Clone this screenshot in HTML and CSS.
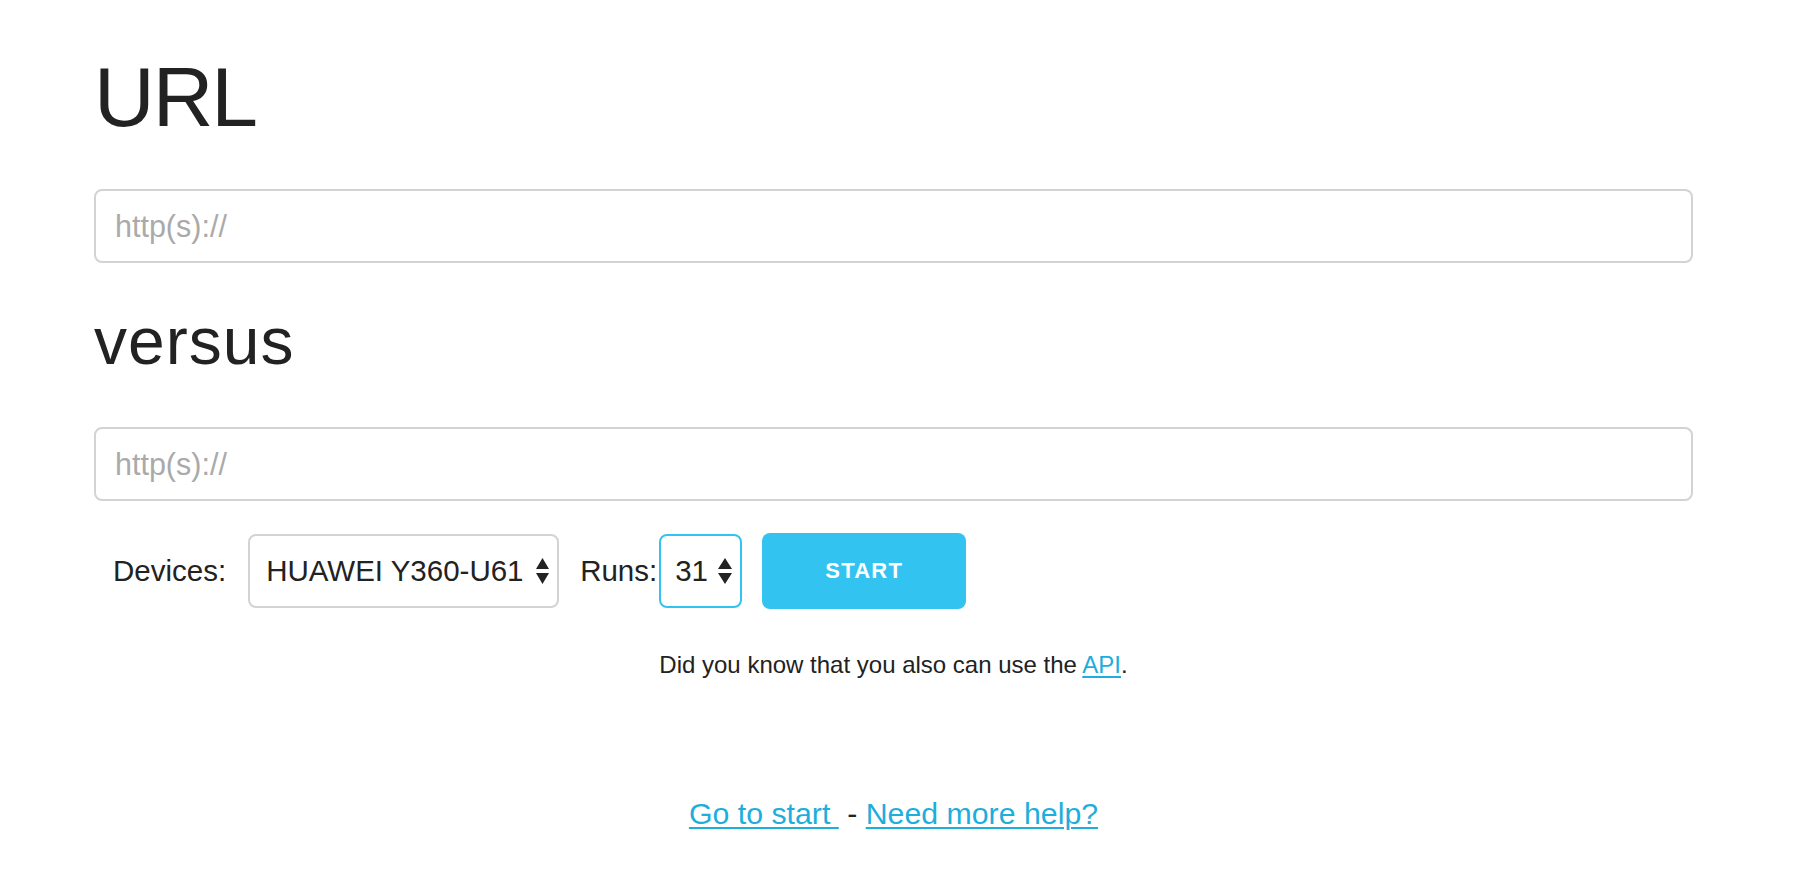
FILE: index.html
```html
<!DOCTYPE html>
<html lang="en">
<head>
<meta charset="utf-8">
<title>URL versus</title>
<link rel="stylesheet" href="styles.css">
</head>
<body>
<main class="page">
  <h1 class="title">URL</h1>
  <input class="url-input" type="text" placeholder="http(s)://">
  <h2 class="versus">versus</h2>
  <input class="url-input url-input-second" type="text" placeholder="http(s)://">
  <div class="controls">
    <span class="label label-devices">Devices:</span>
    <div class="select-box select-devices">
      <span class="select-value">HUAWEI Y360-U61</span>
      <svg class="select-arrows" width="13" height="26" viewBox="0 0 13 26"><path d="M6.5 0 L13 11 L0 11 Z M0 15 L13 15 L6.5 26 Z" fill="#222"/></svg>
    </div>
    <span class="label label-runs">Runs:</span>
    <div class="select-box select-runs">
      <span class="select-value">31</span>
      <svg class="select-arrows" width="14" height="26" viewBox="0 0 14 26"><path d="M7 0 L14 11 L0 11 Z M0 15 L14 15 L7 26 Z" fill="#222"/></svg>
    </div>
    <button class="btn-start" type="button">Start</button>
  </div>
  <p class="api-note">Did you know that you also can use the <a href="#" class="link">API</a>.</p>
  <p class="footer-links"><a href="#" class="link">Go to start&nbsp;</a> - <a href="#" class="link">Need more help?</a></p>
</main>
</body>
</html>
```
FILE: styles.css
```css
html, body {
  margin: 0;
  padding: 0;
  background: #fff;
}

body {
  font-family: "Liberation Sans", Arial, Helvetica, sans-serif;
  color: #222;
}

.page {
  margin-left: 94px;
  width: 1599px;
  padding-top: 47px;
  display: flex;
  flex-direction: column;
}

.title {
  margin: 0;
  font-size: 84px;
  line-height: 100px;
  font-weight: 400;
  letter-spacing: -2px;
  color: #222;
}

.versus {
  margin: 40px 0 0;
  font-size: 66px;
  line-height: 77px;
  font-weight: 400;
  letter-spacing: 1px;
  color: #222;
}

.url-input {
  box-sizing: border-box;
  margin: 42px 0 0;
  width: 100%;
  height: 74px;
  padding: 0 19px;
  border: 2px solid #d3d3d3;
  border-radius: 8px;
  font-family: "Liberation Sans", Arial, sans-serif;
  font-size: 30.5px;
  color: #222;
  background: #fff;
  outline: none;
}

.url-input::placeholder {
  color: #aaa;
}

.url-input-second {
  margin-top: 47px;
}

.controls {
  display: flex;
  align-items: center;
  margin-top: 32px;
  padding-left: 19px;
  height: 75px;
}

.label {
  font-size: 29.5px;
  color: #222;
}

.select-box {
  box-sizing: border-box;
  display: flex;
  align-items: center;
  height: 74px;
  border: 2px solid #d3d3d3;
  border-radius: 8px;
  background: #fff;
  font-size: 29.5px;
  color: #222;
}

.select-devices {
  width: 311px;
  margin-left: 22px;
  padding: 0 8px 0 16px;
}

.select-devices .select-arrows {
  margin-left: auto;
}

.label-runs {
  margin-left: 21px;
}

.select-runs {
  width: 83px;
  margin-left: 2px;
  padding: 0 8px 0 14px;
  border-color: #33c3f0;
}

.select-runs .select-arrows {
  margin-left: auto;
}

.select-value {
  white-space: nowrap;
}

.btn-start {
  box-sizing: border-box;
  margin-left: 20px;
  width: 204px;
  height: 76px;
  border: none;
  border-radius: 8px;
  background: #33c3f0;
  color: #fff;
  font-family: "Liberation Sans", Arial, sans-serif;
  font-size: 22px;
  font-weight: 700;
  letter-spacing: 1.2px;
  text-transform: uppercase;
  cursor: pointer;
}

.api-note {
  margin: 39px 0 0;
  font-size: 24px;
  line-height: 36px;
  text-align: center;
}

.footer-links {
  margin: 111px 0 0;
  font-size: 30.3px;
  line-height: 40px;
  text-align: center;
}

.link {
  color: #1eaedb;
  text-decoration: underline;
  text-decoration-thickness: 2px;
  text-underline-offset: 3px;
}
```
